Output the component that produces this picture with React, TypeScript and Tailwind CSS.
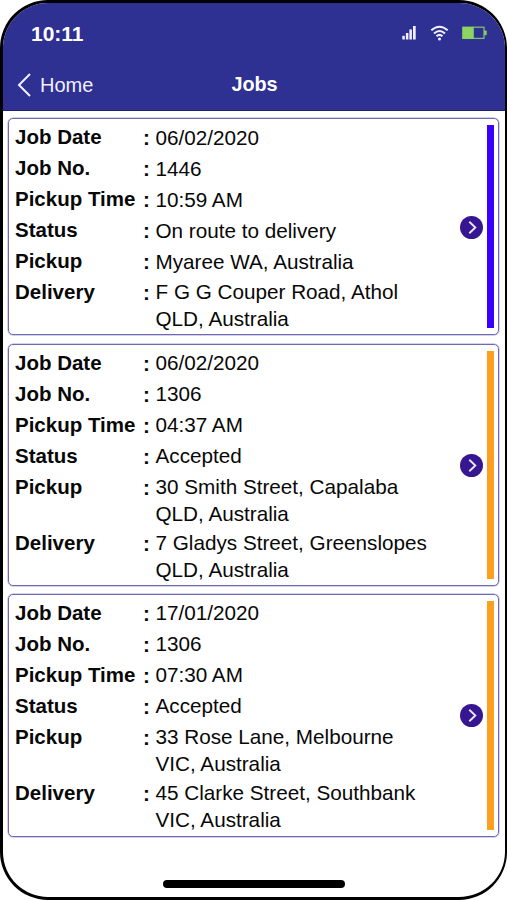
type Job = {
  bar: string;
  cardClass: string;
  buttonClass: string;
  valueShift: string;
  date: string;
  number: string;
  time: string;
  status: string;
  pickup: string[];
  delivery: string[];
};

const jobs: Job[] = [
  {
    bar: "bg-[#3a00ff]",
    cardClass: "h-[217px]",
    buttonClass: "mt-[97px]",
    valueShift: "pt-px",
    date: "06/02/2020",
    number: "1446",
    time: "10:59 AM",
    status: "On route to delivery",
    pickup: ["Myaree WA, Australia"],
    delivery: ["F G G Couper Road, Athol", "QLD, Australia"],
  },
  {
    bar: "bg-[#ff9f1f]",
    cardClass: "h-[242px]",
    buttonClass: "mt-[109px]",
    valueShift: "pt-0",
    date: "06/02/2020",
    number: "1306",
    time: "04:37 AM",
    status: "Accepted",
    pickup: ["30 Smith Street, Capalaba", "QLD, Australia"],
    delivery: ["7 Gladys Street, Greenslopes", "QLD, Australia"],
  },
  {
    bar: "bg-[#ff9f1f]",
    cardClass: "-mt-px h-[243px]",
    buttonClass: "mt-[109px]",
    valueShift: "pt-0",
    date: "17/01/2020",
    number: "1306",
    time: "07:30 AM",
    status: "Accepted",
    pickup: ["33 Rose Lane, Melbourne", "VIC, Australia"],
    delivery: ["45 Clarke Street, Southbank", "VIC, Australia"],
  },
];

function Row({ label, lines, shift }: { label: string; lines: string[]; shift: string }) {
  const double = lines.length > 1;
  return (
    <div className={`flex ${double ? "h-[56px]" : "h-[31px]"}`}>
      <span className="w-[128px] text-[20.5px] font-bold leading-[31px]">{label}</span>
      <span className="w-[12.5px] pt-px font-bold leading-[31px]">:</span>
      <div className={double ? "pt-[2px] leading-[27px]" : `leading-[31px] ${shift}`}>
        {lines.map((line) => (
          <div key={line}>{line}</div>
        ))}
      </div>
    </div>
  );
}

function JobCard({ job }: { job: Job }) {
  return (
    <article
      className={`flex rounded-[5px] border border-[#6f69b5] pl-[6px] pr-[4px] shadow-[0_0_0_0.5px_#a9a5d6] ${job.cardClass}`}
    >
      <div className="flex-1 whitespace-nowrap pt-[2px]">
        <Row label="Job Date" lines={[job.date]} shift={job.valueShift} />
        <Row label="Job No." lines={[job.number]} shift={job.valueShift} />
        <Row label="Pickup Time" lines={[job.time]} shift={job.valueShift} />
        <Row label="Status" lines={[job.status]} shift={job.valueShift} />
        <Row label="Pickup" lines={job.pickup} shift={job.valueShift} />
        <Row label="Delivery" lines={job.delivery} shift={job.valueShift} />
      </div>
      <button
        aria-label="Open job"
        className={`mr-[4px] flex size-[23px] items-center justify-center rounded-full bg-[#371691] ${job.buttonClass}`}
      >
        <svg width="23" height="23" viewBox="0 0 23 23" fill="none" stroke="#ebe6fa" strokeWidth="1.9">
          <path d="M9.3 5.8 15.3 11.5 9.3 17.2" />
        </svg>
      </button>
      <div className={`mb-[6.5px] mt-[5.5px] w-[7px] ${job.bar}`} />
    </article>
  );
}

function StatusIcons() {
  return (
    <div className="flex items-center">
      <svg width="15" height="16" viewBox="0 0 15 16" fill="#f0f0ff">
        <rect x="0.3" y="10.8" width="2.5" height="3.7" />
        <rect x="3.9" y="8" width="2.5" height="6.5" />
        <rect x="7.4" y="4.4" width="2.5" height="10.1" />
        <rect x="11" y="1" width="2.7" height="13.5" />
      </svg>
      <svg className="ml-[13px]" width="19" height="16" viewBox="0 0 19 16" fill="none" stroke="#f0f0ff" strokeWidth="2">
        <path d="M1.3 5.3Q9.5-1.8 17.7 5.3M4 8.4Q9.5 3.6 15 8.4M6.5 11.2Q9.5 8.6 12.5 11.2" />
        <circle cx="9.5" cy="14.1" r="1.5" fill="#f0f0ff" stroke="none" />
      </svg>
      <svg className="ml-[13px]" width="26" height="16" viewBox="0 0 26 16">
        <rect x="0.8" y="2.2" width="21.2" height="11.2" fill="none" stroke="#7dbb72" strokeWidth="1.3" />
        <rect x="0.6" y="2" width="11.2" height="11.7" fill="#8cd35f" />
        <rect x="22.2" y="5.5" width="2.5" height="4.8" rx="0.7" fill="#8cd35f" />
      </svg>
    </div>
  );
}

export default function App() {
  return (
    <div className="h-[900px] w-[507px] bg-white font-['Liberation_Sans',Arial,sans-serif] text-[20.7px] text-[#080808]">
      <main className="flex h-full flex-col overflow-hidden rounded-[48px] border-3 border-r-2 border-black bg-white">
        <header className="h-[108px] shrink-0 border-b border-[#211f78] bg-[#2e3092] text-white">
          <div className="flex h-[58px] items-center justify-between pl-[28px] pr-[17px] pt-[3px]">
            <time className="pt-px text-[21px] font-bold">10:11</time>
            <div className="pb-px">
              <StatusIcons />
            </div>
          </div>
          <div className="grid h-[47px] grid-cols-[1fr_auto_1fr] items-center">
            <button className="flex items-center gap-[9px] pl-[14px] text-[20px] text-[#f0f0ff]">
              <svg width="14" height="24" viewBox="0 0 14 24" fill="none" stroke="#f0f0ff" strokeWidth="2">
                <path d="M13 1 2 12 13 23" />
              </svg>
              Home
            </button>
            <h1 className="pl-px text-[19.8px] font-bold">Jobs</h1>
          </div>
        </header>
        <div className="mt-[7px] flex flex-col gap-[9px] pl-[5px] pr-[6px]">
          {jobs.map((job) => (
            <JobCard key={job.date + job.time} job={job} />
          ))}
        </div>
        <div className="mx-auto mb-[9px] mt-auto h-[8px] w-[182px] shrink-0 rounded-full bg-black" />
      </main>
    </div>
  );
}
